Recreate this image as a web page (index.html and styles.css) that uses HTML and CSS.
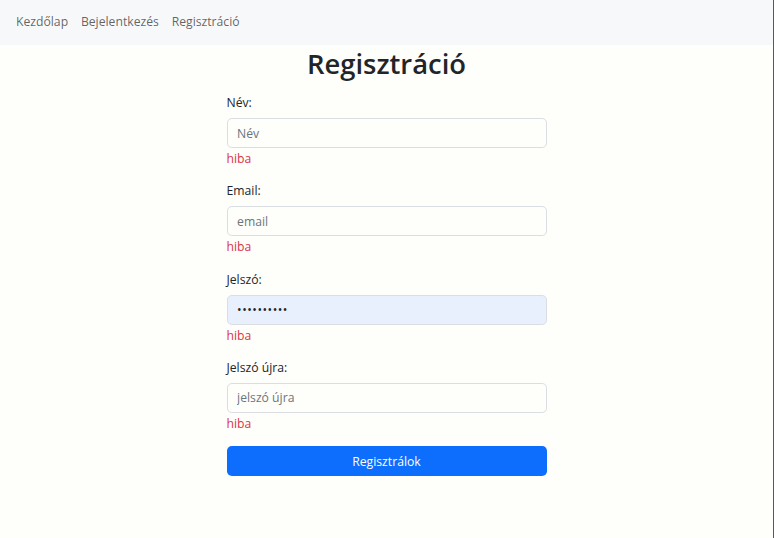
FILE: index.html
```html
<!DOCTYPE html>
<html lang="hu">
<head>
<meta charset="utf-8">
<title>Regisztráció</title>
<link rel="stylesheet" href="styles.css">
</head>
<body>
<nav class="navbar">
  <a class="nav-link" href="#">Kezdőlap</a>
  <a class="nav-link" href="#">Bejelentkezés</a>
  <a class="nav-link" href="#">Regisztráció</a>
</nav>
<main class="page">
  <h1 class="title">Regisztráció</h1>
  <form class="form">
    <div class="group">
      <label class="label">Név:</label>
      <input class="input" type="text" placeholder="Név">
      <div class="error">hiba</div>
    </div>
    <div class="group">
      <label class="label">Email:</label>
      <input class="input" type="text" placeholder="email">
      <div class="error">hiba</div>
    </div>
    <div class="group">
      <label class="label">Jelszó:</label>
      <input class="input input-filled" type="password" value="jelszo1234">
      <div class="error">hiba</div>
    </div>
    <div class="group">
      <label class="label">Jelszó újra:</label>
      <input class="input" type="password" placeholder="jelszó újra">
      <div class="error">hiba</div>
    </div>
    <button class="btn" type="button">Regisztrálok</button>
  </form>
</main>
</body>
</html>
```
FILE: styles.css
```css
* { box-sizing: border-box; }
html, body { margin: 0; padding: 0; }
body {
  background: #fefefa;
  font-family: "Open Sans", "Noto Sans", sans-serif;
  font-size: 12.2px;
  line-height: 1.5;
  color: #212529;
  min-height: 538px;
  border-right: 1px solid #5a5a5a;
}
.navbar {
  height: 45px;
  background: #f7f8f9;
  display: flex;
  align-items: center;
  padding: 0 9.6px;
}
.nav-link {
  color: rgba(0,0,0,0.62);
  text-decoration: none;
  padding: 0 6.4px;
  font-size: 12.2px;
}
.page {
  display: flex;
  flex-direction: column;
  align-items: center;
}
.title {
  margin: 0;
  font-size: 27.4px;
  font-weight: 600;
  line-height: 38px;
  height: 38px;
  color: #212529;
}
.form {
  width: 320px;
  margin-top: 10px;
  display: flex;
  flex-direction: column;
}
.group {
  display: flex;
  flex-direction: column;
  margin-bottom: 13.3px;
}
.label {
  height: 19px;
  line-height: 19px;
  margin-bottom: 6px;
}
.input {
  height: 30px;
  width: 100%;
  border: 1px solid #dadde2;
  border-radius: 4.8px;
  background: #fefefa;
  padding: 0 9.6px;
  font-family: inherit;
  font-size: 12.2px;
  color: #212529;
  outline: none;
}
.input::placeholder { color: #6c757d; }
.input-filled { background: #e8f0fe; letter-spacing: 0.5px; }
.error {
  color: #dc3545;
  height: 19px;
  line-height: 19px;
  margin-top: 1px;
}
.btn {
  height: 30px;
  width: 100%;
  border: none;
  border-radius: 4.8px;
  background: #0d6efd;
  color: #fff;
  font-family: inherit;
  font-size: 12.2px;
}
```
